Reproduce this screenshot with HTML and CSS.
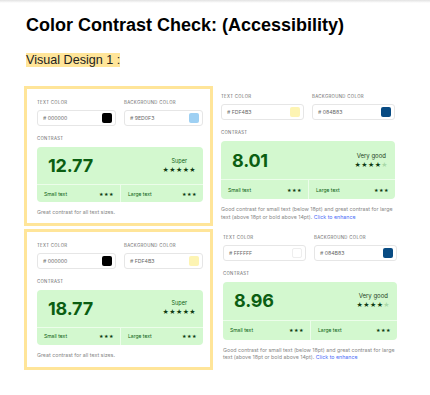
FILE: index.html
```html
<!DOCTYPE html>
<html lang="en">
<head>
  <meta charset="UTF-8">
  <title>Color Contrast Check</title>
  <link rel="stylesheet" href="styles.css">
</head>
<body>
  <div class="topbar"></div>
  <h1 class="doc-title">Color Contrast Check: (Accessibility)</h1>
  <p class="doc-sub"><span class="hl">Visual Design 1 :</span></p>

  <div class="board">
    <section class="checker framed">
      <div class="fields">
        <div class="field">
          <div class="label">Text color</div>
          <div class="input"><span># 000000</span><span class="swatch" style="background:#000000"></span></div>
        </div>
        <div class="field">
          <div class="label">Background color</div>
          <div class="input"><span># 9ED0F3</span><span class="swatch" style="background:#9ed0f3"></span></div>
        </div>
      </div>
      <div class="label contrast-label">Contrast</div>
      <div class="result">
        <div class="score">
          <span class="ratio">12.77</span>
          <div class="rating"><span>Super</span><span class="stars">★★★★★</span></div>
        </div>
        <div class="sizes">
          <div class="size"><span>Small text</span><span class="mini-stars">★★★</span></div>
          <div class="size"><span>Large text</span><span class="mini-stars">★★★</span></div>
        </div>
      </div>
      <p class="note">Great contrast for all text sizes.</p>
    </section>

    <section class="checker plain">
      <div class="fields">
        <div class="field">
          <div class="label">Text color</div>
          <div class="input"><span># FDF4B3</span><span class="swatch" style="background:#fdf4b3"></span></div>
        </div>
        <div class="field">
          <div class="label">Background color</div>
          <div class="input"><span># 084B83</span><span class="swatch" style="background:#084b83"></span></div>
        </div>
      </div>
      <div class="label contrast-label">Contrast</div>
      <div class="result">
        <div class="score">
          <span class="ratio">8.01</span>
          <div class="rating"><span>Very good</span><span class="stars">★★★★<i>★</i></span></div>
        </div>
        <div class="sizes">
          <div class="size"><span>Small text</span><span class="mini-stars">★★★</span></div>
          <div class="size"><span>Large text</span><span class="mini-stars">★★★</span></div>
        </div>
      </div>
      <p class="note">Good contrast for small text (below 18pt) and great contrast for large text (above 18pt or bold above 14pt). <a href="#">Click to enhance</a></p>
    </section>

    <section class="checker framed lower">
      <div class="fields">
        <div class="field">
          <div class="label">Text color</div>
          <div class="input"><span># 000000</span><span class="swatch" style="background:#000000"></span></div>
        </div>
        <div class="field">
          <div class="label">Background color</div>
          <div class="input"><span># FDF4B3</span><span class="swatch" style="background:#fdf4b3"></span></div>
        </div>
      </div>
      <div class="label contrast-label">Contrast</div>
      <div class="result">
        <div class="score">
          <span class="ratio">18.77</span>
          <div class="rating"><span>Super</span><span class="stars">★★★★★</span></div>
        </div>
        <div class="sizes">
          <div class="size"><span>Small text</span><span class="mini-stars">★★★</span></div>
          <div class="size"><span>Large text</span><span class="mini-stars">★★★</span></div>
        </div>
      </div>
      <p class="note">Great contrast for all text sizes.</p>
    </section>

    <section class="checker plain lower">
      <div class="fields">
        <div class="field">
          <div class="label">Text color</div>
          <div class="input"><span># FFFFFF</span><span class="swatch light" style="background:#ffffff"></span></div>
        </div>
        <div class="field">
          <div class="label">Background color</div>
          <div class="input"><span># 084B83</span><span class="swatch" style="background:#084b83"></span></div>
        </div>
      </div>
      <div class="label contrast-label">Contrast</div>
      <div class="result">
        <div class="score">
          <span class="ratio">8.96</span>
          <div class="rating"><span>Very good</span><span class="stars">★★★★<i>★</i></span></div>
        </div>
        <div class="sizes">
          <div class="size"><span>Small text</span><span class="mini-stars">★★★</span></div>
          <div class="size"><span>Large text</span><span class="mini-stars">★★★</span></div>
        </div>
      </div>
      <p class="note">Good contrast for small text (below 18pt) and great contrast for large text (above 18pt or bold above 14pt). <a href="#">Click to enhance</a></p>
    </section>
  </div>
</body>
</html>
```

FILE: styles.css
```css
body {
  margin: 0;
  background: #fff;
  font-family: 'Liberation Sans', Arial, sans-serif;
  color: #000;
}
.topbar {
  height: 3px;
  background: linear-gradient(#e2e2e2, #fff);
}
.doc-title {
  margin: 11px 0 0 26px;
  font-size: 18px;
  line-height: 22px;
  font-weight: bold;
}
.doc-sub {
  margin: 17px 0 0 26px;
  font-size: 12.6px;
  line-height: 15px;
}
.hl {
  background: #ffe599;
  color: #222;
}

/* checker grid */
.board {
  display: grid;
  grid-template-columns: 189px 190px;
  row-gap: 3px;
  margin: 18px 0 0 24px;
}
.checker {
  font-family: Inter, 'Noto Sans', sans-serif;
}
.checker.framed {
  border: 3px solid #ffe599;
  padding: 11px 7px 6px 10px;
}
.checker.framed.lower {
  padding-bottom: 8px;
}
.checker.plain {
  padding: 8px 8px 0 8px;
}
.checker.plain.lower {
  padding: 6px 6px 0 10px;
}
.fields {
  display: grid;
  grid-template-columns: 1fr 1fr;
  gap: 8px;
}
.label {
  font-size: 4.3px;
  line-height: 6px;
  letter-spacing: 0.35px;
  text-transform: uppercase;
  color: #666;
  margin-bottom: 4px;
}
.input {
  height: 16px;
  box-sizing: border-box;
  border: 1px solid #e6e6e6;
  border-radius: 3px;
  display: flex;
  align-items: center;
  justify-content: space-between;
  padding: 0 3px 0 5px;
  font-size: 5.2px;
  color: #666;
}
.swatch {
  width: 10px;
  height: 10px;
  border-radius: 2px;
}
.swatch.light {
  border: 1px solid #eee;
  box-sizing: border-box;
}
.contrast-label {
  margin-top: 10px;
  margin-bottom: 5px;
}
.result {
  background: #d3f8cf;
  border-radius: 4px;
  color: #0b5e12;
}
.score {
  height: 37px;
  display: flex;
  align-items: center;
  justify-content: space-between;
  padding: 0 7px 0 11px;
  border-bottom: 1px solid #ecfdea;
}
.plain .score {
  height: 38px;
}
.ratio {
  font-size: 18px;
  font-weight: 700;
  letter-spacing: -0.2px;
}
.rating {
  display: flex;
  flex-direction: column;
  align-items: center;
  font-size: 5.5px;
  gap: 2px;
}
.plain .rating {
  font-size: 6px;
  color: #1d3f1d;
}
.stars {
  font-family: 'DejaVu Sans', sans-serif;
  font-size: 7px;
  letter-spacing: 0.4px;
  color: #0d3b12;
}
.stars i {
  font-style: normal;
  color: #a9d9a7;
}
.sizes {
  display: grid;
  grid-template-columns: 1fr 1fr;
  height: 17px;
}
.plain .sizes {
  height: 19px;
}
.size {
  display: flex;
  align-items: center;
  justify-content: space-between;
  padding: 0 6px 0 7px;
  font-size: 5px;
}
.size + .size {
  border-left: 1px solid #ecfdea;
}
.mini-stars {
  font-family: 'DejaVu Sans', sans-serif;
  font-size: 5px;
  letter-spacing: 0.5px;
  color: #0d3b12;
}
.note {
  margin: 7px 0 0;
  font-size: 5.3px;
  line-height: 7.5px;
  color: #888;
}
.note a {
  color: #4a6cf7;
  text-decoration: none;
}
```
